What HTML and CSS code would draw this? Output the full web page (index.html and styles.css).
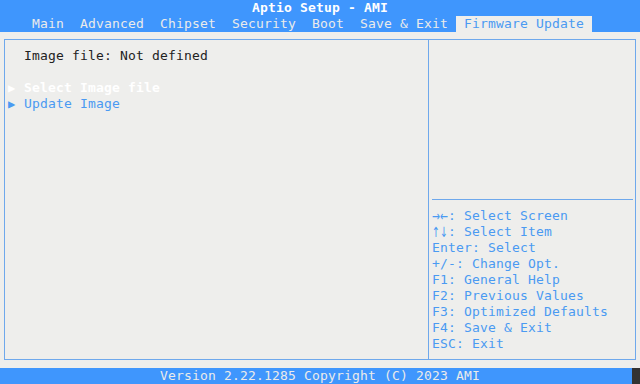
FILE: index.html
```html
<!DOCTYPE html>
<html lang="en">
<head>
    <meta charset="UTF-8">
    <meta name="viewport" content="width=device-width, initial-scale=1.0">
    <title>Aptio Setup - AMI</title>
    <link rel="stylesheet" href="styles.css">
</head>
<body>
    <div class="screen">
        <div class="header">
            <div class="title">Aptio Setup - AMI</div>
            <div class="menu">
                <span class="tab">Main</span>
                <span class="tab">Advanced</span>
                <span class="tab">Chipset</span>
                <span class="tab">Security</span>
                <span class="tab">Boot</span>
                <span class="tab">Save &amp; Exit</span>
                <span class="tab active">Firmware Update</span>
            </div>
        </div>

        <div class="main">
            <div class="box">
                <div class="left">
                    <div class="line info">Image file: Not defined</div>
                    <div class="line"></div>
                    <div class="line item selected"><span class="marker">▶</span>Select Image file</div>
                    <div class="line item"><span class="marker">▶</span>Update Image</div>
                </div>
                <div class="right">
                    <div class="desc"></div>
                    <div class="rule"></div>
                    <div class="help">
                        <div class="line"><span class="keys"><span class="squeeze">→←</span></span>: Select Screen</div>
                        <div class="line"><span class="keys"><span class="squeeze">↑↓</span></span>: Select Item</div>
                        <div class="line">Enter: Select</div>
                        <div class="line">+/-: Change Opt.</div>
                        <div class="line">F1: General Help</div>
                        <div class="line">F2: Previous Values</div>
                        <div class="line">F3: Optimized Defaults</div>
                        <div class="line">F4: Save &amp; Exit</div>
                        <div class="line">ESC: Exit</div>
                    </div>
                </div>
            </div>
        </div>

        <div class="footer">
            Version 2.22.1285 Copyright (C) 2023 AMI
            <span class="cursor"></span>
        </div>
    </div>
</body>
</html>
```

FILE: styles.css
```css
body {
    margin: 0;
    padding: 0;
    background: #eeeeec;
    font-family: "DejaVu Sans Mono", monospace;
    font-size: 13px;
    letter-spacing: 0.17px;
    line-height: 16px;
}
.screen {
    width: 640px;
    height: 384px;
    display: flex;
    flex-direction: column;
    overflow: hidden;
}
.header {
    background: #3f96fd;
    height: 32px;
}
.title {
    height: 16px;
    text-align: center;
    color: #ffffff;
    font-weight: bold;
}
.menu {
    height: 16px;
    display: flex;
    padding-left: 24px;
    color: #ebebea;
    white-space: pre;
}
.tab {
    padding: 0 8px;
}
.tab.active {
    background: #eeeeec;
    color: #4a9af2;
}
.main {
    height: 336px;
}
.box {
    margin: 7px 4px 0 4px;
    height: 319px;
    border: 1px solid #6ea8ec;
    display: flex;
}
.left {
    width: 420px;
    padding: 8px 0 0 3px;
    border-right: 1px solid #6ea8ec;
}
.line {
    height: 16px;
    white-space: pre;
}
.info {
    padding-left: 16px;
    color: #222222;
}
.item {
    color: #4a9af2;
}
.item.selected {
    color: #ffffff;
    font-weight: bold;
}
.marker {
    display: inline-block;
    width: 16px;
    font-size: 12px;
    font-weight: normal;
}
.keys {
    display: inline-block;
    width: 16px;
    height: 16px;
    overflow: hidden;
    vertical-align: top;
}
.squeeze {
    display: inline-block;
    font-family: "DejaVu Sans", sans-serif;
    font-size: 14px;
    letter-spacing: 0;
    transform: scaleX(0.68);
    transform-origin: left center;
}
.right {
    flex: 1;
    display: flex;
    flex-direction: column;
}
.desc {
    height: 159px;
}
.rule {
    height: 1px;
    margin: 0 2px 0 3px;
    background: #6ea8ec;
}
.help {
    padding: 8px 0 0 3px;
    color: #4a9af2;
}
.footer {
    position: relative;
    height: 16px;
    background: #3f96fd;
    color: #ebebea;
    text-align: center;
}
.cursor {
    position: absolute;
    right: 0;
    top: 0;
    width: 8px;
    height: 16px;
    background: #333333;
}
```
